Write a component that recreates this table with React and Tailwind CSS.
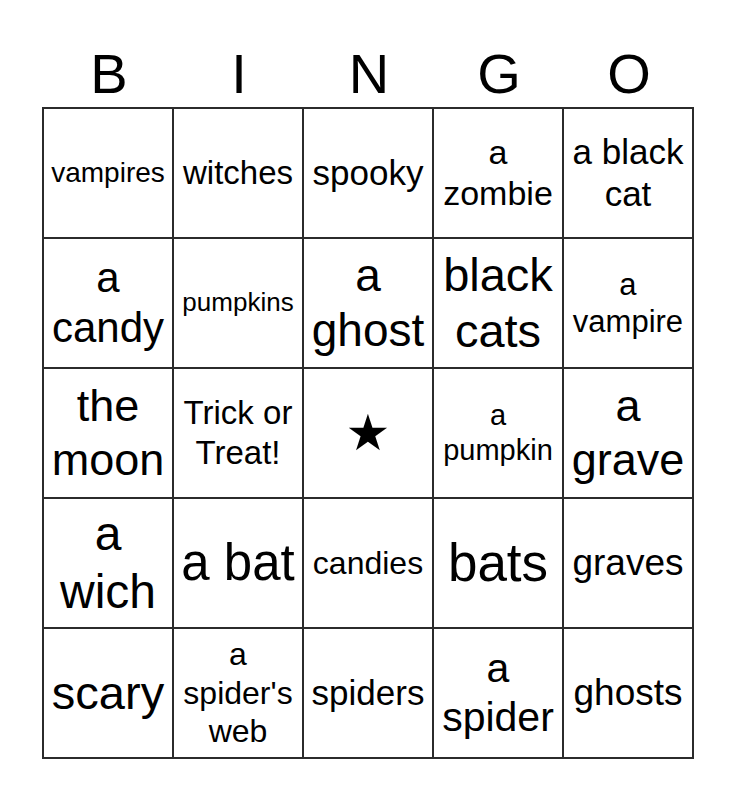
import React from 'react';

const letters = ['B', 'I', 'N', 'G', 'O'];

// each cell: lines of text + font size class
const cells = [
    { lines: ['vampires'], size: 'text-[28px]' },
    { lines: ['witches'], size: 'text-[33px]' },
    { lines: ['spooky'], size: 'text-[35px]' },
    { lines: ['a', 'zombie'], size: 'text-[34px]' },
    { lines: ['a black', 'cat'], size: 'text-[35px]' },

    { lines: ['a', 'candy'], size: 'text-[42px]' },
    { lines: ['pumpkins'], size: 'text-[26px]' },
    { lines: ['a', 'ghost'], size: 'text-[46px]' },
    { lines: ['black', 'cats'], size: 'text-[47px]' },
    { lines: ['a', 'vampire'], size: 'text-[31px]' },

    { lines: ['the', 'moon'], size: 'text-[45px]' },
    { lines: ['Trick or', 'Treat!'], size: 'text-[33px]' },
    { lines: ['★'], size: 'text-[50px]', star: true },
    { lines: ['a', 'pumpkin'], size: 'text-[29px]' },
    { lines: ['a', 'grave'], size: 'text-[45px]' },

    { lines: ['a', 'wich'], size: 'text-[48px]' },
    { lines: ['a bat'], size: 'text-[51px]' },
    { lines: ['candies'], size: 'text-[32px]' },
    { lines: ['bats'], size: 'text-[53px]' },
    { lines: ['graves'], size: 'text-[37px]' },

    { lines: ['scary'], size: 'text-[47px]' },
    { lines: ['a', "spider's", 'web'], size: 'text-[32px]' },
    { lines: ['spiders'], size: 'text-[35px]' },
    { lines: ['a', 'spider'], size: 'text-[41px]' },
    { lines: ['ghosts'], size: 'text-[37px]' },
];

const App = () => {
    return (
        <div className="w-[736px] h-[800px] bg-white text-black font-['Liberation_Sans',Arial,sans-serif]">
            <div className="ml-[42px] w-[652px]">
                {/* Header letters */}
                <div className="grid grid-cols-[repeat(5,130px)] pl-[2px] pt-[42px] h-[107px]">
                    {letters.map((l) => (
                        <div key={l} className="text-center text-[56px] leading-[64px]">
                            {l}
                        </div>
                    ))}
                </div>

                {/* Card */}
                <div className="grid grid-cols-[repeat(5,130px)] border-l-2 border-t-2 border-[#2b2b2b]">
                    {cells.map((c, i) => (
                        <div
                            key={i}
                            className="h-[130px] border-r-2 border-b-2 border-[#2b2b2b] flex items-center justify-center text-center"
                        >
                            <div className={`${c.size} leading-[1.2] ${c.star ? "font-['DejaVu_Sans',sans-serif]" : ''}`}>
                                {c.lines.map((line, j) => (
                                    <div key={j}>{line}</div>
                                ))}
                            </div>
                        </div>
                    ))}
                </div>
            </div>
        </div>
    );
};

export default App;
